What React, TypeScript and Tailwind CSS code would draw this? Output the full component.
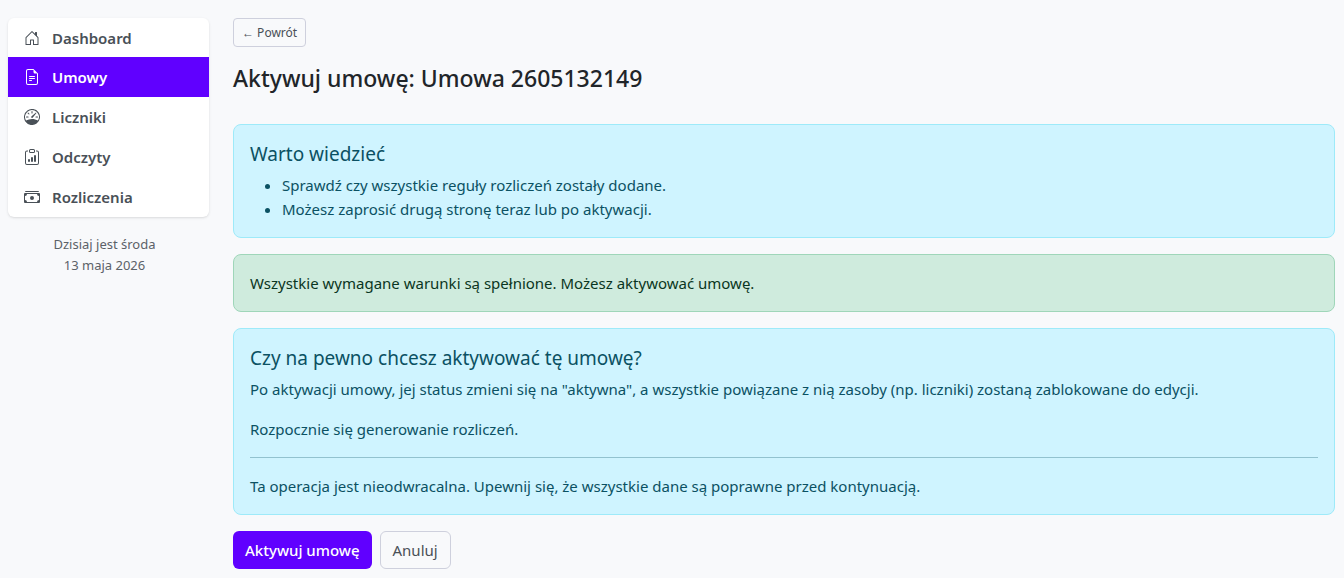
import type { ReactNode } from "react";
import type { IconType } from "react-icons";
import {
  BsCashStack,
  BsClipboardData,
  BsFileEarmarkText,
  BsHouseDoor,
  BsSpeedometer,
} from "react-icons/bs";
import clsx from "clsx";

type NavItem = { label: string; href: string; icon: IconType; active?: boolean };

const navItems: NavItem[] = [
  { label: "Dashboard", href: "#dashboard", icon: BsHouseDoor },
  { label: "Umowy", href: "#umowy", icon: BsFileEarmarkText, active: true },
  { label: "Liczniki", href: "#liczniki", icon: BsSpeedometer },
  { label: "Odczyty", href: "#odczyty", icon: BsClipboardData },
  { label: "Rozliczenia", href: "#rozliczenia", icon: BsCashStack },
];

function Sidebar() {
  return (
    <aside className="w-[201px] shrink-0">
      <nav className="overflow-hidden rounded-md bg-white shadow-sm">
        {navItems.map(({ label, href, icon: Icon, active }) => (
          <a
            key={label}
            href={href}
            className={clsx(
              "flex h-10 items-center gap-3 px-4 text-[15px] font-semibold first:h-[39px]",
              active ? "bg-[#6000ff] text-white" : "text-[#495057]"
            )}
          >
            <Icon size={16} />
            {label}
          </a>
        ))}
      </nav>
      <p className="mt-[17px] pr-2 text-center text-[13px] leading-[21px] text-[#5c6268]">
        Dzisiaj jest środa
        <br />
        13 maja 2026
      </p>
    </aside>
  );
}

function Alert({ variant = "info", children }: { variant?: "info" | "success"; children: ReactNode }) {
  return (
    <div
      role="alert"
      className={clsx(
        "rounded-lg border p-4",
        variant === "info" && "border-[#9eeaf9] bg-[#cff4ff] text-[#0b5163]",
        variant === "success" && "border-[#9fd6b9] bg-[#cfebdd] text-[#0a3622]"
      )}
    >
      {children}
    </div>
  );
}

export default function App() {
  return (
    <div className="flex min-h-screen gap-6 bg-[#f8f9fb] pt-[18px] pr-[9px] pb-[9px] pl-2 font-['Noto_Sans','Open_Sans',sans-serif] text-[15px] leading-6 text-[#212529]">
      <Sidebar />

      <main className="min-w-0 flex-1">
        <a
          href="#umowy"
          className="inline-flex h-[29px] items-center rounded border border-[#ced0dd] px-2 text-xs text-[#495057]"
        >
          ← Powrót
        </a>

        <h1 className="mt-[17px] mb-[31px] text-[23px] leading-[29px] font-medium">
          Aktywuj umowę: Umowa 2605132149
        </h1>

        <div className="flex flex-col gap-4">
          <Alert>
            <h2 className="mb-1.5 text-[19px] leading-[26px]">Warto wiedzieć</h2>
            <ul className="list-disc pl-8">
              <li>Sprawdź czy wszystkie reguły rozliczeń zostały dodane.</li>
              <li>Możesz zaprosić drugą stronę teraz lub po aktywacji.</li>
            </ul>
          </Alert>

          <Alert variant="success">
            Wszystkie wymagane warunki są spełnione. Możesz aktywować umowę.
          </Alert>

          <Alert>
            <h2 className="mb-1.5 text-[19px] leading-[26px]">Czy na pewno chcesz aktywować tę umowę?</h2>
            <p className="mb-4">
              Po aktywacji umowy, jej status zmieni się na "aktywna", a wszystkie powiązane z nią
              zasoby (np. liczniki) zostaną zablokowane do edycji.
            </p>
            <p>Rozpocznie się generowanie rozliczeń.</p>
            <hr className="my-4 border-[#055160]/30" />
            <p>Ta operacja jest nieodwracalna. Upewnij się, że wszystkie dane są poprawne przed kontynuacją.</p>
          </Alert>

          <div className="flex gap-2">
            <button type="submit" className="h-[38px] rounded-md bg-[#6000ff] px-3 font-medium text-white">
              Aktywuj umowę
            </button>
            <button type="button" className="h-[38px] rounded-md border border-[#ced0dd] px-3 text-[#495057]">
              Anuluj
            </button>
          </div>
        </div>
      </main>
    </div>
  );
}
